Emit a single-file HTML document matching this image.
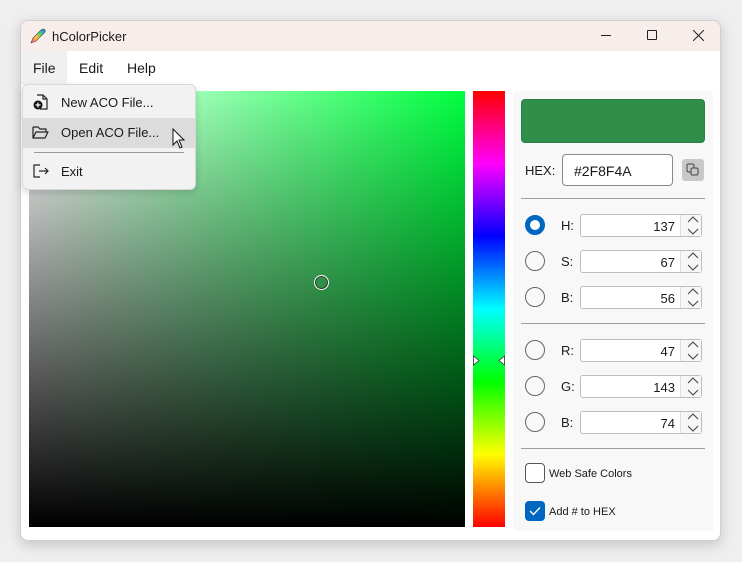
<!DOCTYPE html>
<html><head><style>
*{margin:0;padding:0;box-sizing:border-box}
body{width:742px;height:562px;background:#efefef;font-family:"Liberation Sans",sans-serif;position:relative;overflow:hidden;color:#1a1a1a}
.a{position:absolute}
.win{left:20px;top:20px;width:701px;height:521px;background:#fff;border:1px solid #cfcfcf;border-radius:8px;box-shadow:0 4px 14px rgba(0,0,0,.18);overflow:hidden}
.title{left:0;top:0;width:701px;height:30px;background:#f7eeec}
.lbl{font-size:13px}
.spin{width:122px;height:23px;background:#fff;border:1px solid #bdbdbd;border-radius:3px;font-size:13px}
.spin span{position:absolute;right:26px;top:4px}
.spin i{position:absolute;right:0;top:0;width:21px;height:21px;border-left:1px solid #ddd;background:#f7f7f7}
.rad{width:20px;height:20px;border:1.5px solid #666;border-radius:50%}
.sep{left:521px;width:184px;height:1px;background:#a0a0a0}
.mi{font-size:13px}
</style></head><body>
<div class="a win">
 <div class="a title"></div>
 <svg class="a" style="left:8px;top:6px" width="18" height="18" viewBox="0 0 18 18"><defs><linearGradient id="p" x1="0" y1="1" x2="1" y2="0"><stop offset="0" stop-color="#f4a"/><stop offset=".4" stop-color="#fc3"/><stop offset=".7" stop-color="#3c8"/><stop offset="1" stop-color="#36f"/></linearGradient></defs><path d="M2 16 L4 11 L12 3 Q15 1 16 3 Q17 5 14 7 L7 14 Z" fill="url(#p)" stroke="#444" stroke-width=".6"/></svg>
 <div class="a lbl" style="left:31px;top:8px">hColorPicker</div>
 <div class="a" style="left:580px;top:14px;width:10px;height:1px;background:#222"></div>
 <div class="a" style="left:626px;top:9px;width:10px;height:10px;border:1px solid #222;border-radius:1px"></div>
 <svg class="a" style="left:672px;top:9px" width="11" height="11"><path d="M0 0L11 11M11 0L0 11" stroke="#222"/></svg>
 <div class="a" style="left:0;top:30px;width:46px;height:34px;background:#f0f0f0"></div>
 <div class="a" style="left:12px;top:39px;font-size:14px">File</div>
 <div class="a" style="left:58px;top:39px;font-size:14px">Edit</div>
 <div class="a" style="left:106px;top:39px;font-size:14px">Help</div>
</div>
<div class="a" style="left:29px;top:91px;width:436px;height:436px;background:linear-gradient(to right,#fff,#00ff40)"></div>
<div class="a" style="left:29px;top:91px;width:436px;height:436px;background:linear-gradient(to bottom,rgba(0,0,0,0),#000)"></div>
<div class="a" style="left:314px;top:275px;width:15px;height:15px;border:1.5px solid #fff;border-radius:50%;box-shadow:0 0 0 1px #333 inset"></div>
<div class="a" style="left:473px;top:91px;width:32px;height:436px;background:linear-gradient(to bottom,#f00,#f0f 16.7%,#00f 33.3%,#0ff 50%,#0f0 66.7%,#ff0 83.3%,#f00)"></div>
<svg class="a" style="left:473px;top:355px" width="32" height="11"><path d="M0.5 1L6 5.5L0.5 10Z M31.5 1L26 5.5L31.5 10Z" fill="#fff" stroke="#333" stroke-width=".8"/></svg>
<div class="a" style="left:513px;top:91px;width:200px;height:440px;background:#f8f8f8;border-radius:4px"></div>
<div class="a" style="left:521px;top:99px;width:184px;height:44px;background:#2f8f4a;border-radius:4px;border:1px solid #2a7f42"></div>
<div class="a lbl" style="left:525px;top:163px">HEX:</div>
<div class="a" style="left:562px;top:154px;width:111px;height:32px;background:#fff;border:1px solid #888;border-radius:4px;font-size:14px;padding:8px 0 0 11px">#2F8F4A</div>
<div class="a" style="left:682px;top:159px;width:22px;height:22px;background:#c8c8c8;border-radius:3px"></div>
<svg class="a" style="left:686px;top:163px" width="14" height="14"><rect x="1" y="1" width="7" height="8" rx="1.5" fill="none" stroke="#444"/><rect x="5" y="5" width="7" height="7" rx="1.5" fill="#c8c8c8" stroke="#444"/></svg>
<div class="a sep" style="top:198px"></div>
<div class="a sep" style="top:323px"></div>
<div class="a sep" style="top:448px"></div>
<div class="a" style="left:525px;top:215px;width:20px;height:20px;border-radius:50%;border:5.5px solid #0067c0;background:#fff"></div>
<div class="a rad" style="left:525px;top:251px"></div>
<div class="a rad" style="left:525px;top:287px"></div>
<div class="a rad" style="left:525px;top:340px"></div>
<div class="a rad" style="left:525px;top:376px"></div>
<div class="a rad" style="left:525px;top:412px"></div>
<div class="a lbl" style="left:561px;top:218px">H:</div>
<div class="a lbl" style="left:561px;top:254px">S:</div>
<div class="a lbl" style="left:561px;top:290px">B:</div>
<div class="a lbl" style="left:561px;top:343px">R:</div>
<div class="a lbl" style="left:561px;top:379px">G:</div>
<div class="a lbl" style="left:561px;top:415px">B:</div>
<div class="a spin" style="left:580px;top:214px"><span>137</span><i></i></div>
<div class="a spin" style="left:580px;top:250px"><span>67</span><i></i></div>
<div class="a spin" style="left:580px;top:286px"><span>56</span><i></i></div>
<div class="a spin" style="left:580px;top:339px"><span>47</span><i></i></div>
<div class="a spin" style="left:580px;top:375px"><span>143</span><i></i></div>
<div class="a spin" style="left:580px;top:411px"><span>74</span><i></i></div>
<svg class="a" style="left:683px;top:214px" width="20" height="230"><g fill="none" stroke="#444" stroke-width="1.1"><path id="ar" d="M5 8L10 3L15 8M5 15L10 20L15 15"/><use href="#ar" y="36"/><use href="#ar" y="72"/><use href="#ar" y="125"/><use href="#ar" y="161"/><use href="#ar" y="197"/></g></svg>
<div class="a" style="left:525px;top:463px;width:20px;height:20px;border:1.3px solid #555;border-radius:4px;background:#fff"></div>
<div class="a" style="left:549px;top:468px;font-size:11px">Web Safe Colors</div>
<div class="a" style="left:525px;top:501px;width:20px;height:20px;border-radius:4px;background:#0067c0"></div>
<svg class="a" style="left:525px;top:501px" width="20" height="20"><path d="M5 10L8.5 13.5L15 6.5" fill="none" stroke="#fff" stroke-width="1.4"/></svg>
<div class="a" style="left:549px;top:506px;font-size:11px">Add # to HEX</div>
<div class="a" style="left:22px;top:84px;width:174px;height:106px;background:#f2f2f2;border:1px solid #d8d8d8;border-radius:6px;box-shadow:0 3px 8px rgba(0,0,0,.15)"></div>
<div class="a" style="left:23px;top:118px;width:172px;height:30px;background:#dcdcdc"></div>
<div class="a" style="left:34px;top:152px;width:150px;height:1px;background:#999"></div>
<svg class="a" style="left:32px;top:93px" width="18" height="18"><path d="M5 2H11L15 6V16H8" fill="none" stroke="#222" stroke-width="1.2"/><path d="M11 2V6H15" fill="none" stroke="#222" stroke-width="1.2"/><circle cx="6" cy="12" r="4.5" fill="#111"/><path d="M6 9.5V14.5M3.5 12H8.5" stroke="#fff" stroke-width="1.2"/></svg>
<svg class="a" style="left:32px;top:124px" width="18" height="16"><path d="M1 3H6L8 5H14V8M1 3V14H13L16 8H4L1 14" fill="none" stroke="#222" stroke-width="1.2" stroke-linejoin="round"/></svg>
<svg class="a" style="left:32px;top:163px" width="18" height="16"><path d="M8 2H2V14H8M7 8H16M13 5L16 8L13 11" fill="none" stroke="#222" stroke-width="1.2"/></svg>
<div class="a mi" style="left:61px;top:95px">New ACO File...</div>
<div class="a mi" style="left:61px;top:125px">Open ACO File...</div>
<div class="a mi" style="left:61px;top:164px">Exit</div>
<svg class="a" style="left:172px;top:128px" width="14" height="22"><path d="M1 1V17L5 13L8 20L10 19L7 12H12Z" fill="#fff" stroke="#111" stroke-width="1"/></svg>
</body></html>
